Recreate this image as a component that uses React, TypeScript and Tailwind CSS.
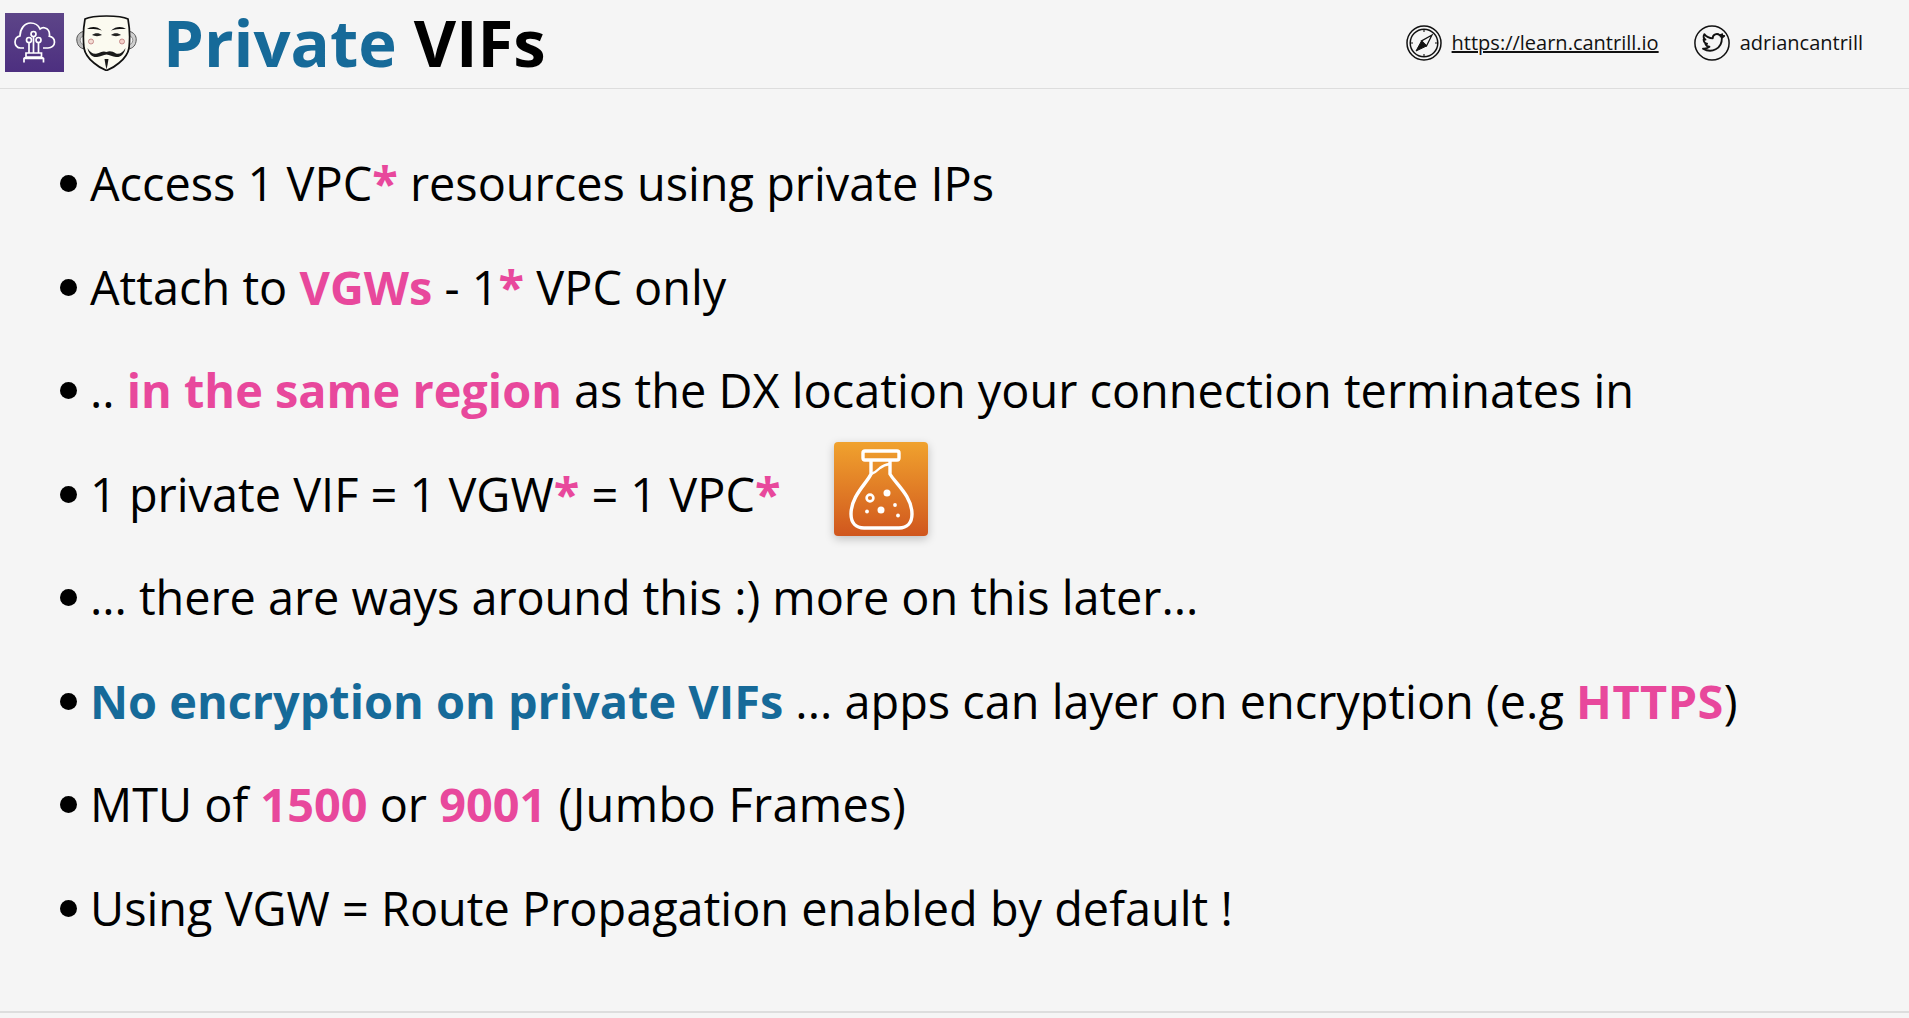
const P = ({ children, className = "" }: { children: React.ReactNode; className?: string }) => <span className={`font-bold text-[#e8489c] ${className}`}>{children}</span>;
const B = ({ children }: { children: React.ReactNode }) => <span className="font-bold text-[#166a99]">{children}</span>;

function Row({ children, extra }: { children: React.ReactNode; extra?: React.ReactNode }) {
  return (
    <div className="flex h-[103.5px] items-center whitespace-pre text-[46.85px] leading-none text-black">
      <span className="mr-[13px] h-[17px] w-[17px] shrink-0 rounded-full bg-black" />
      <span>{children}</span>
      {extra}
    </div>
  );
}

function CloudIcon() {
  return (
    <div className="flex h-[59px] w-[59px] shrink-0 items-center justify-center bg-gradient-to-b from-[#5d4588] to-[#4d2f80]">
      <svg viewBox="0 0 59 59" className="h-[59px] w-[59px]" fill="none" stroke="#fff" strokeWidth="1.700">
        <path d="M19 35h-3.500C12 35 10 32 10 29c0-3 2-5.500 5-6.200C15 16 19.500 10 25.500 10c4.500 0 8 2.500 9.500 6 1.500-1.200 3.500-1.700 5.200-1 2.800 1 4.300 3.500 4.300 6.500 0 .8 0 1.200-.2 1.700 3 .7 5.200 3 5.200 6 0 3.500-3 5.800-6.500 5.800H38" />
        <circle cx="24" cy="27" r="2.500" />
        <circle cx="28.500" cy="21" r="2.500" />
        <circle cx="33.500" cy="27" r="2.500" />
        <path d="M24 29.500V40M28.500 23.500V40M33.500 29.500V40M21 40h15.500v4H21zM21 44l-2 1.500v4M36.500 44l2 1.500v4M19 45.500h19.500" />
      </svg>
    </div>
  );
}

function MaskIcon() {
  return (
    <svg viewBox="0 0 61 56" className="h-[56px] w-[61px] shrink-0">
      <path d="M9 16C3 17 .5 21 .8 25c.3 5 3 8.500 8.200 9z" fill="#bdbdbd" stroke="#555" strokeWidth="1" />
      <path d="M9 20.500C5.500 21 4 23 4.200 25.500 4.400 28 6 29.500 9 30z" fill="#f2f2f2" stroke="#777" strokeWidth=".8" />
      <path d="M52 16c6 1 8.500 5 8.200 9-.3 5-3 8.500-8.200 9z" fill="#d0d0d0" stroke="#555" strokeWidth="1" />
      <path d="M52 20.500c3.500.5 5 2.500 4.800 5-.2 2.500-1.800 4-4.800 4.500z" fill="#f2f2f2" stroke="#777" strokeWidth=".8" />
      <path d="M30.500 1C23 1 13 2 9 4 7.500 12 7 24 8 33c1 6 5 11 10 15 4 3.500 8.500 6 12.500 7.500C34.500 54 39 51.500 43 48c5-4 9-9 10-15 1-9 .5-21-1-29-4-2-14-3-21.500-3z" fill="#fbfaf0" stroke="#111" strokeWidth="1.700" />
      <path d="M11 14c4-3 10-3 15 1.500-5-1.500-10-1.800-15-1.500zM50 14c-4-3-10-3-15 1.500 5-1.500 10-1.800 15-1.500z" fill="#111" />
      <path d="M16 20c3-2.500 7-2.500 10 0-3 1.500-7 1.500-10 0zM35 20c3-2.500 7-2.500 10 0-3 1.500-7 1.500-10 0z" fill="#222" />
      <circle cx="15" cy="26.500" r="2.500" fill="#f3dcd4" stroke="#b77" strokeWidth=".8" />
      <circle cx="46" cy="26.500" r="2.500" fill="#f3cfc8" stroke="#b77" strokeWidth=".8" />
      <path d="M11.500 33c2.500 4.500 6 6.500 9.500 5.500 3.500-1 6-3 9.500-1.500 3.500-1.500 6-.5 9.500 1.500 3.500 1 7-1 9.500-5.500-1 6-5 9.500-9.500 9-3.500-.5-6.500-2-9.500-2.500-3 .5-6 2-9.500 2.500-4.500.5-8.500-3-9.500-9z" fill="#1a1a1a" />
      <path d="M28.500 44h4l-1 6-1 4.500-1-4.500z" fill="#1a1a1a" />
    </svg>
  );
}

function CompassIcon() {
  return (
    <svg viewBox="0 0 36 36" className="h-[36px] w-[36px] shrink-0" fill="none" stroke="#111" strokeWidth="1.500">
      <circle cx="18" cy="18" r="17" />
      <circle cx="18" cy="18" r="13.800" />
      <path d="M18 4.500v2.500M18 29v2.500M4.500 18H7M29 18h2.500" strokeWidth="1.100" />
      <path d="M26 10l-10.500 6 5 5z" fill="#f5f5f5" strokeWidth="1.300" />
      <path d="M10 26l5.500-10 5 5z" fill="#111" stroke="#111" strokeWidth="1" strokeLinejoin="round" />
    </svg>
  );
}

function TwitterIcon() {
  return (
    <svg viewBox="0 0 36 36" className="h-[36px] w-[36px] shrink-0" fill="none" stroke="#111" strokeWidth="1.500">
      <circle cx="18" cy="18" r="17.100" />
      <g transform="translate(18 18) scale(1.22) translate(-18 -18)">
        <path d="M27 12.200c-.7.300-1.400.500-2 .500.700-.500 1.200-1.100 1.400-1.900-.7.400-1.400.700-2.200.800-1.800-1.900-5.800-.800-5.600 2.600-2.800-.1-5.200-1.400-6.900-3.500-.9 1.600-.400 3.600 1 4.600-.6 0-1.100-.2-1.600-.4 0 1.800 1.200 3.300 2.900 3.700-.5.100-1 .1-1.500 0 .5 1.400 1.800 2.500 3.400 2.500-1.500 1.200-3.400 1.700-5.300 1.500 7 4.200 15.700.2 15.500-8.700.8-.5 1.300-1.200 1.900-1.700z" strokeWidth="1.500" strokeLinejoin="round" />
      </g>
    </svg>
  );
}

function LabIcon() {
  return (
    <div className="mb-[10px] ml-[54px] flex h-[94px] w-[94px] shrink-0 items-center justify-center rounded-[4px] bg-gradient-to-b from-[#f0a22e] to-[#d0561e] shadow-[0_3px_10px_rgba(0,0,0,0.22)]">
      <svg viewBox="0 0 94 94" className="h-[94px] w-[94px]" fill="none" stroke="#fff" strokeWidth="3.400" strokeLinejoin="round">
        <rect x="29" y="9" width="36" height="9" rx="2" />
        <path d="M37 18v14C33 41 17 54 17 72c0 9 5 14 13 14h35c8 0 13-5 13-14 0-18-17-31-22-40V18" />
        <path d="M37 32c3-1 6-3 9-6 3-2.500 6-3.500 10-4" strokeWidth="2.400" />
        <circle cx="36" cy="56" r="3.400" strokeWidth="2.600" />
        <circle cx="53" cy="51" r="3.500" fill="#fff" stroke="none" />
        <circle cx="61" cy="63" r="1.900" fill="#fff" stroke="none" />
        <circle cx="47" cy="68" r="3.500" fill="#fff" stroke="none" />
        <circle cx="33" cy="69.500" r="1.900" fill="#fff" stroke="none" />
        <circle cx="64" cy="73.500" r="1.900" fill="#fff" stroke="none" />
      </svg>
    </div>
  );
}

export default function App() {
  return (
    <div className="flex h-[1018px] w-[1909px] flex-col overflow-hidden bg-[#f5f5f5] font-['Open_Sans',sans-serif]">
      <header className="flex h-[89px] shrink-0 items-center border-b border-[#dddddd] pb-[3px] pl-[5px] pr-[46px]">
        <CloudIcon />
        <div className="ml-[12px]"><MaskIcon /></div>
        <h1 className="ml-[26px] text-[65.2px] font-bold leading-[1.2] text-black"><span className="text-[#166a99]">Private</span> VIFs</h1>
        <div className="ml-auto flex items-center text-[20px] text-[#111]">
          <CompassIcon />
          <span className="ml-[10px] underline">https://learn.cantrill.io</span>
          <div className="ml-[35px]"><TwitterIcon /></div>
          <span className="ml-[10px]">adriancantrill</span>
        </div>
      </header>
      <main className="flex-1 pl-[60px] pt-[43px]">
        <Row>Access 1 VPC<P>*</P> resources using private IPs</Row>
        <Row>Attach to <P>VGWs</P> - 1<P>*</P> VPC only</Row>
        <Row>.. <P>in the same region</P> as the DX location your connection terminates in</Row>
        <Row extra={<LabIcon />}>1 private VIF = 1 VGW<P>*</P> = 1 VPC<P>*</P></Row>
        <Row><span className="tracking-[-0.05px]">... there are ways around this :) more on this later...</span></Row>
        <Row><B>No encryption on private VIFs</B> ... apps can layer on encryption (e.g <P className="tracking-[0.5px]">HTTPS</P>)</Row>
        <Row>MTU of <P>1500</P> or <P>9001</P> <span className="tracking-[0.35px]">(Jumbo Frames)</span></Row>
        <Row>Using VGW = Route Propagation enabled by default !</Row>
      </main>
      <div className="h-[7px] shrink-0 border-t-2 border-[#dddddd]" />
    </div>
  );
}
